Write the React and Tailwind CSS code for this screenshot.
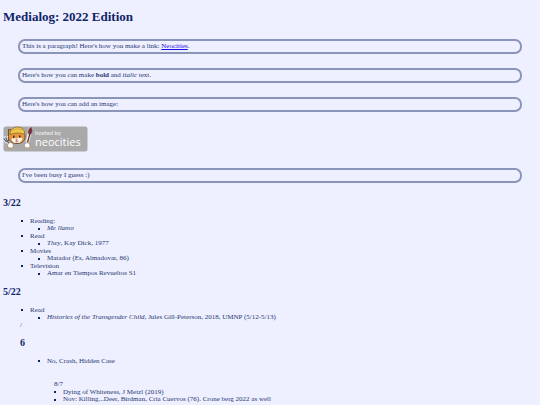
import React from 'react';

const readingLog = [
  { category: 'Reading:', entry: <i>Me llamo</i> },
  { category: 'Read', entry: <><i>They</i>, Kay Dick, 1977</> },
  { category: 'Movies', entry: 'Matador (Es, Almadovar, 86)' },
  { category: 'Television', entry: 'Amar en Tiempos Revueltos S1' },
];

function Note({ children }) {
  return (
    <p className="mx-[15px] rounded-[7px] border-2 border-[#8b95ba] px-[2px] leading-[11px]">
      {children}
    </p>
  );
}

function Heading({ children }) {
  return <h2 className="text-[10px] leading-[12px] font-bold text-[#0f2568]">{children}</h2>;
}

function Item({ children, nested }) {
  return (
    <div className={`flex items-center gap-[7px] ${nested ? 'leading-[7px]' : 'leading-[8px]'}`}>
      <span className="size-[2px] shrink-0 bg-[#0f2568]" />
      <span>{children}</span>
    </div>
  );
}

function Category({ name, children }) {
  return (
    <li>
      <Item>{name}</Item>
      <ul className="pl-[17px]">
        <li><Item nested>{children}</Item></li>
      </ul>
    </li>
  );
}

function NeocitiesBadge() {
  return (
    <svg viewBox="0 0 85 26" className="block h-[26px] w-[85px]" role="img" aria-label="Hosted by Neocities">
      <rect x="0.5" y="0.5" width="84" height="25" rx="2.5" fill="#a9a9a9" />
      {/* fork */}
      <path d="M1.500 10.500l4.500 8M5 10l1 5-3 1-2.500-3" stroke="#e6e6e6" strokeWidth="2.400" fill="none" />
      <path d="M0.800 12.500l2.400 3 2.800-.8-.6-3.700M2.600 11.500l4 7.500" stroke="#5d6066" strokeWidth="1.200" fill="none" />
      {/* brush */}
      <path d="M27.500 3l-3.500 15" stroke="#f0e9e6" strokeWidth="3.600" strokeLinecap="round" />
      <path d="M26.800 8l-2.600 10" stroke="#54382c" strokeWidth="1.200" />
      <path d="M28 1.200c1.600 2.400 1.200 5.400-.8 7.200l-1.600-.6c-.6-2.800.4-5 2.400-6.600z" fill="#842633" stroke="#4b2430" strokeWidth="0.500" />
      {/* cat face and ears */}
      <path d="M5.500 3.500l4 1 10-1 2.500 6c.6 4.500-2.500 8-8 8s-8.700-3-8.500-7z" fill="#e9953f" stroke="#65462b" strokeWidth="0.900" />
      <path d="M8.500 13c1.500-1.800 3.500-1.600 5-.2 1.600-1.600 4-2 6-.3-.5 3-2.500 4.600-5.500 4.600S9 16 8.500 13z" fill="#fff5e6" />
      <ellipse cx="10.800" cy="11" rx="0.800" ry="1.400" fill="#432c24" />
      <ellipse cx="16.800" cy="10.600" rx="0.800" ry="1.400" fill="#432c24" />
      <path d="M12.600 13.800l1.800-.1-.8.900zM12.300 15.500c1 .6 2 .6 3-.1" fill="#923c32" stroke="#923c32" strokeWidth="0.500" />
      {/* hat */}
      <path d="M7 8.500C7 3.500 11 .7 15 1c4.500.3 7 3.500 6.800 7.500C17 6.500 12 6.500 7 8.500z" fill="#efca4d" stroke="#8c6727" strokeWidth="0.800" />
      <path d="M10 4.500c2.500-2 6.500-2 9 0" stroke="#c69232" strokeWidth="0.700" fill="none" />
      {/* paws */}
      <circle cx="7.500" cy="19.500" r="3" fill="#fff" stroke="#937561" strokeWidth="0.700" />
      <circle cx="24.200" cy="19.500" r="2.900" fill="#fff" stroke="#937561" strokeWidth="0.700" />
      <path d="M6 21.300l2.500.6M23 21.400l2.300-.2" stroke="#e8a959" strokeWidth="0.800" />
      <text x="32" y="9" fontSize="6" fill="#f5f5f5" fontFamily="Lato, sans-serif">hosted by</text>
      <text x="32" y="20" fontSize="11" fill="#fff" fontFamily="'Open Sans', sans-serif">neocities</text>
    </svg>
  );
}

export default function App() {
  return (
    <main className="min-h-screen bg-[#eeefff] px-[3px] pt-[9px] font-['Liberation_Serif','Times_New_Roman',serif] text-[7px] leading-[8px] text-[#26396f]">
      <h1 className="text-[13px] leading-[16px] font-bold text-[#0f2568]">Medialog: 2022 Edition</h1>

      <div className="mt-[14px] flex flex-col gap-[14px]">
        <Note>
          This is a paragraph! Here's how you make a link:{' '}
          <a href="https://neocities.org" className="text-[#1a0fe8] underline">Neocities</a>.
        </Note>
        <Note>
          Here's how you can make <strong>bold</strong> and <i>italic</i> text.
        </Note>
        <Note>Here's how you can add an image:</Note>
        <NeocitiesBadge />
      </div>

      <div className="mt-[16px] mb-[14px]">
        <Note>I've been busy I guess :)</Note>
      </div>

      <Heading>3/22</Heading>
      <ul className="mt-[8px] mb-[9px] pl-[18px]">
        {readingLog.map(({ category, entry }) => (
          <Category key={category} name={category}>{entry}</Category>
        ))}
      </ul>

      <Heading>5/22</Heading>
      <ul className="mt-[8px] pl-[18px]">
        <Category name="Read">
          <i>Histories of the Transgender Child</i>, Jules Gill-Peterson, 2018, UMNP (5/12-5/13)
        </Category>
      </ul>

      <section className="pl-[17px]">
        <p className="mb-[8px]">/</p>
        <Heading>6</Heading>
        <ul className="mt-[8px] pl-[18px]">
          <li><Item>No, Crash, Hidden Case</Item></li>
        </ul>
        <div className="mt-[15px] pl-[34px]">
          <p>8/7</p>
          <ul>
            <li><Item>Dying of Whiteness, J Metzl (2019)</Item></li>
            <li><Item nested>Nov: Killing...Deer, Birdman, Cria Cuervos (76). Crone berg 2022 as well</Item></li>
          </ul>
        </div>
      </section>
    </main>
  );
}
